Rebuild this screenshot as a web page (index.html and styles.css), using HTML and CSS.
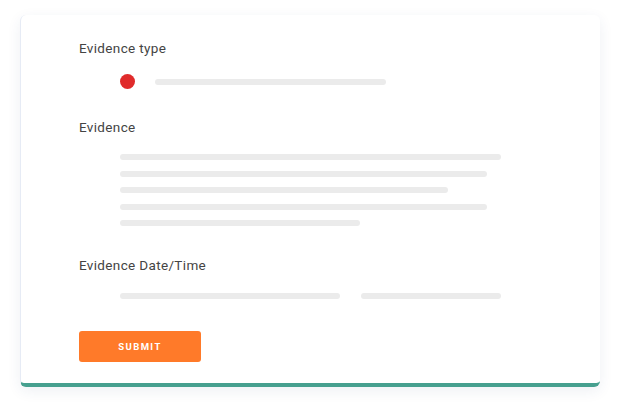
FILE: index.html
```
<!DOCTYPE html>
<html>
<head>
<meta charset="utf-8">
<link rel="stylesheet" href="styles.css">
</head>
<body>
<div class="card">
  <div class="label">Evidence type</div>
  <div class="type-row">
    <span class="dot"></span>
    <span class="bar type-bar"></span>
  </div>
  <div class="label label-evidence">Evidence</div>
  <div class="lines">
    <span class="bar" style="width:381px"></span>
    <span class="bar" style="width:367px"></span>
    <span class="bar" style="width:328px"></span>
    <span class="bar" style="width:367px"></span>
    <span class="bar" style="width:240px"></span>
  </div>
  <div class="label label-date">Evidence Date/Time</div>
  <div class="date-row">
    <span class="bar" style="width:220px"></span>
    <span class="bar" style="width:140px"></span>
  </div>
  <button class="submit">SUBMIT</button>
</div>
</body>
</html>
```
FILE: styles.css
```
html, body {
  margin: 0;
  padding: 0;
  background: #ffffff;
}
body {
  font-family: "Roboto", "Liberation Sans", sans-serif;
  width: 620px;
  height: 412px;
  overflow: hidden;
}
.card {
  margin: 15px 20px 0 20px;
  width: 580px;
  height: 372px;
  box-sizing: border-box;
  padding: 24px 0 0 58px;
  background: #ffffff;
  border-radius: 6px;
  border-left: 1px solid #e6ebf5;
  border-bottom: 4px solid #46a08f;
  box-shadow: 0 4px 14px rgba(40, 60, 120, 0.08);
  display: flex;
  flex-direction: column;
  align-items: flex-start;
}
.label {
  font-size: 13.5px;
  line-height: 18px;
  color: #444444;
  letter-spacing: 0.35px;
}
.type-row {
  display: flex;
  align-items: center;
  gap: 20px;
  margin: 17px 0 0 41px;
  height: 15px;
}
.dot {
  width: 15px;
  height: 15px;
  border-radius: 50%;
  background: #e02b2b;
}
.bar {
  display: block;
  height: 6px;
  border-radius: 3px;
  background: #ebebeb;
}
.type-bar {
  width: 231px;
}
.label-evidence {
  margin-top: 29px;
}
.lines {
  display: flex;
  flex-direction: column;
  gap: 10.5px;
  margin: 18px 0 0 41px;
}
.label-date {
  margin-top: 30px;
}
.date-row {
  display: flex;
  gap: 21px;
  margin: 19px 0 0 41px;
}
.submit {
  margin-top: 32px;
  width: 122px;
  height: 31px;
  border: none;
  border-radius: 3px;
  background: #ff7a29;
  color: #ffffff;
  font-family: "Roboto", "Liberation Sans", sans-serif;
  font-weight: 700;
  font-size: 9.5px;
  letter-spacing: 1.4px;
  padding: 0;
}
```
